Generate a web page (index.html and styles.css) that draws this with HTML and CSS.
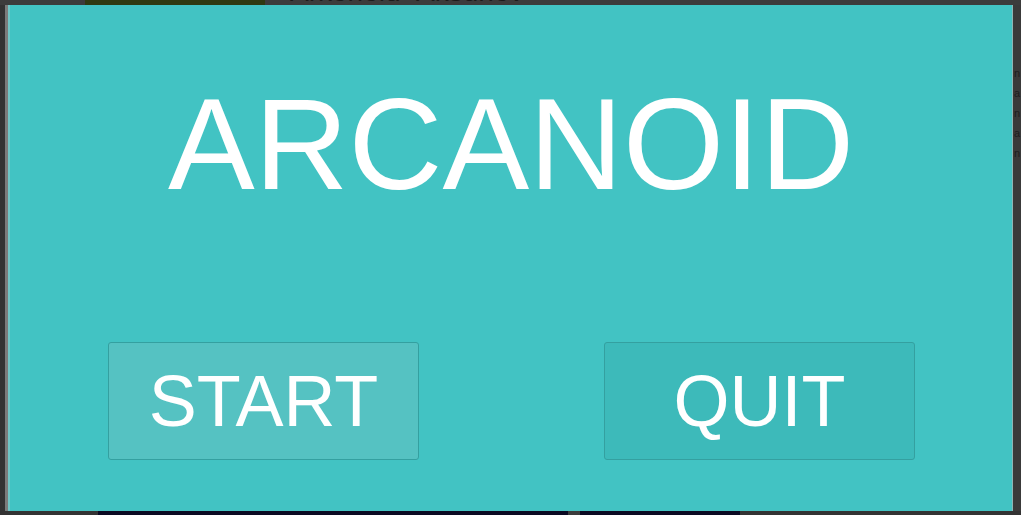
FILE: index.html
```html
<!DOCTYPE html>
<html>
<head>
<meta charset="utf-8">
<link rel="stylesheet" href="styles.css">
</head>
<body>
<div class="top-strip">
  <div class="green-tab"></div>
  <div class="back-title">Arkonoid_Aksunov</div>
</div>
<div class="middle">
  <div class="left-edge"></div>
  <main class="panel">
    <h1 class="title">ARCANOID</h1>
    <div class="buttons">
      <button class="btn btn-start">START</button>
      <button class="btn btn-quit">QUIT</button>
    </div>
  </main>
  <div class="right-edge">
    <span>n</span><span>a</span><span>n</span><span>a</span><span>n</span>
  </div>
</div>
<div class="bottom-strip">
  <div class="navy-a"></div>
  <div class="gray-b"></div>
  <div class="navy-c"></div>
</div>
</body>
</html>
```

FILE: styles.css
```css
html, body {
  margin: 0;
  padding: 0;
  background: #383838;
  overflow: hidden;
  width: 1021px;
  height: 515px;
}

.top-strip {
  height: 5px;
  display: flex;
  overflow: hidden;
  background: #3c3c3c;
}

.green-tab {
  margin-left: 85px;
  width: 180px;
  height: 5px;
  background: #2f3a12;
}

.back-title {
  margin-left: 25px;
  font-family: "Liberation Sans", Arial, sans-serif;
  font-size: 28px;
  line-height: 28px;
  color: #1c1c1c;
  margin-top: -22px;
  white-space: nowrap;
}

.middle {
  display: flex;
  height: 506px;
}

.left-edge {
  width: 5px;
  border-right: 3px solid #7b7b7b;
  background: #333333;
}

.panel {
  width: 1005px;
  height: 506px;
  box-sizing: border-box;
  background: #42c3c3;
  border-left: 2px solid #6fc6c6;
  border-right: 1px solid #8fb5b5;
  padding-top: 74px;
  display: flex;
  flex-direction: column;
  align-items: center;
}

.title {
  margin: 0;
  font-family: "Liberation Sans", Arial, sans-serif;
  font-weight: normal;
  font-size: 130px;
  line-height: 1;
  color: #ffffff;
}

.buttons {
  align-self: stretch;
  margin-top: 133px;
  padding: 0 97px 0 98px;
  display: flex;
  justify-content: space-between;
}

.btn {
  width: 311px;
  height: 118px;
  box-sizing: border-box;
  border: 1px solid #34a0a0;
  border-radius: 3px;
  font-family: "Liberation Sans", Arial, sans-serif;
  font-size: 72px;
  color: #ffffff;
  padding: 0;
  display: flex;
  align-items: center;
  justify-content: center;
}

.btn-start {
  background: #55c2c2;
}

.btn-quit {
  background: #3dbaba;
}

.right-edge {
  flex: 1;
  background: #3a3a3a;
  display: flex;
  flex-direction: column;
  overflow: hidden;
  padding-top: 62px;
  gap: 8px;
  font-family: "Liberation Sans", Arial, sans-serif;
  font-size: 11px;
  color: #1e1e1e;
}

.right-edge span {
  margin-left: 1px;
}

.bottom-strip {
  height: 4px;
  display: flex;
  background: #333333;
}

.navy-a {
  margin-left: 98px;
  width: 470px;
  background: #0b0a22;
}

.gray-b {
  width: 12px;
  background: #3c3c3c;
}

.navy-c {
  width: 160px;
  background: #0b0a22;
}
```
